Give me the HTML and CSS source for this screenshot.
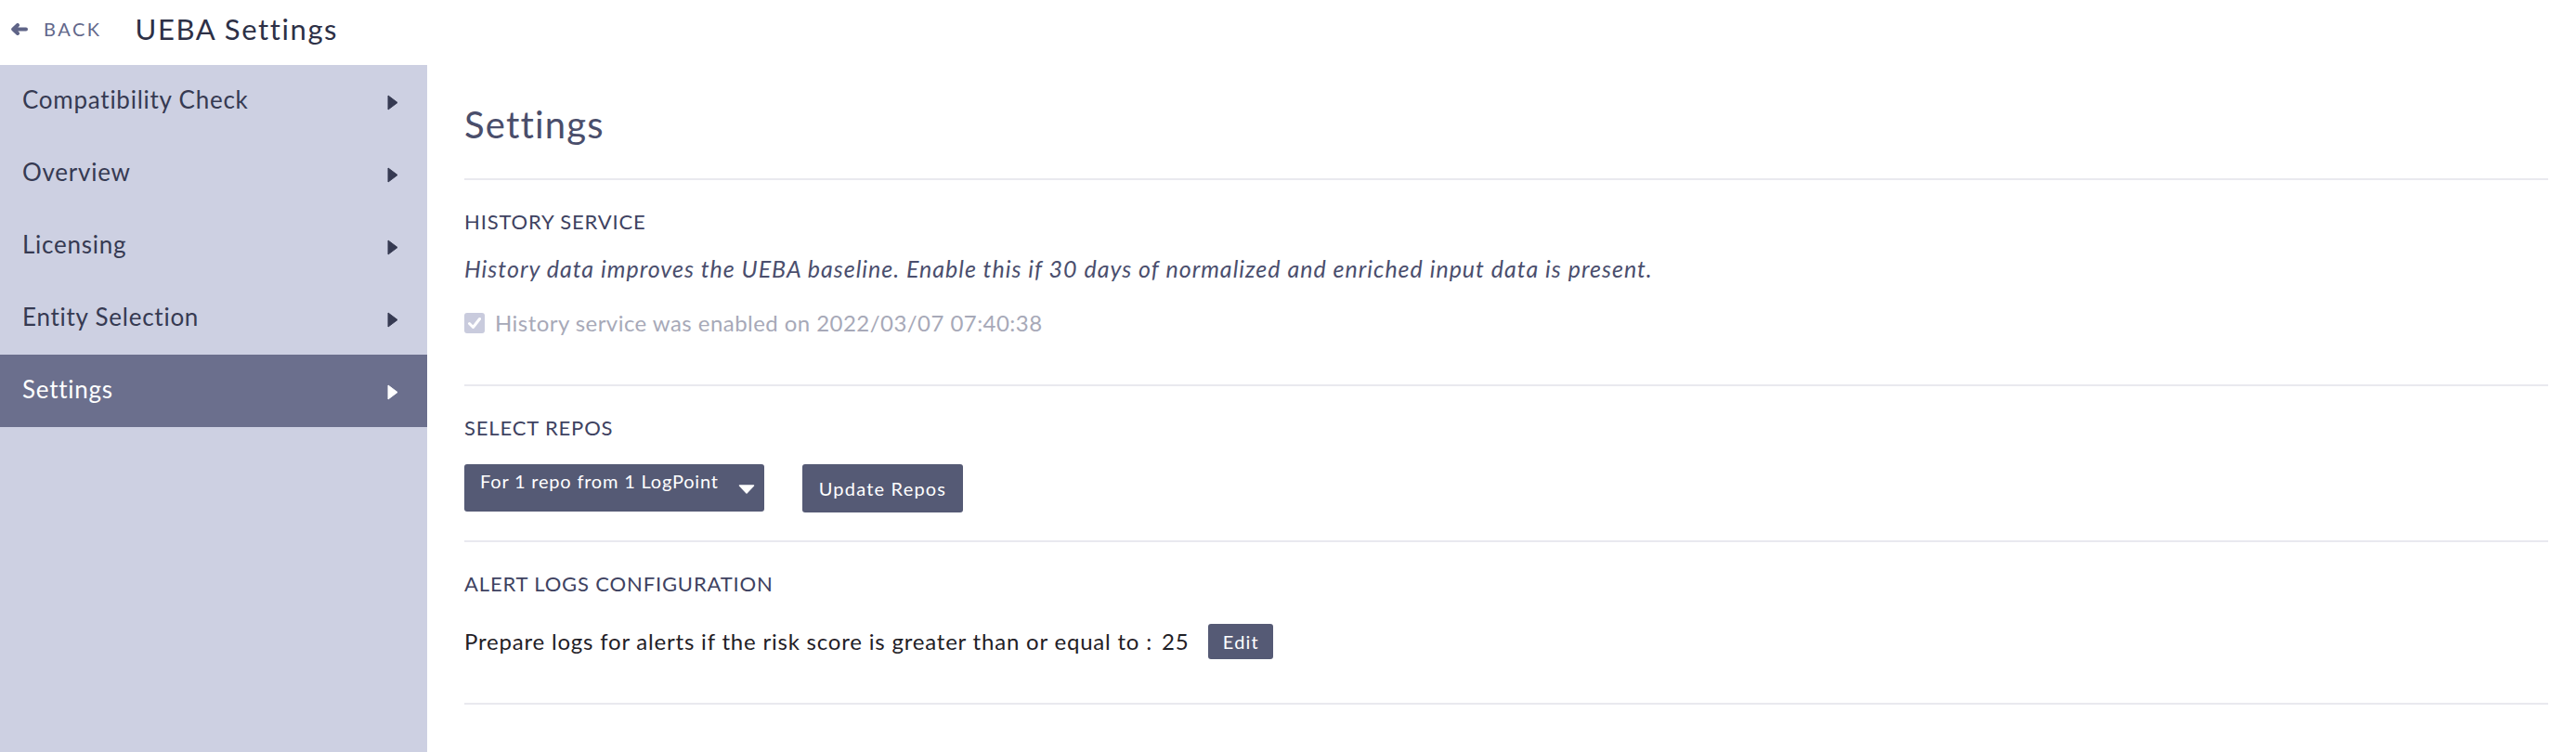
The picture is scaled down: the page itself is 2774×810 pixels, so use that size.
FILE: index.html
```html
<!DOCTYPE html>
<html lang="en">
<head>
<meta charset="utf-8">
<title>UEBA Settings</title>
<link rel="stylesheet" href="styles.css">
</head>
<body>
<header class="topbar">
  <a class="back" href="#">
    <svg class="back-icon" viewBox="0 0 18 13"><path d="M7 2 L2.2 6.5 L7 11 M3 6.5 H16" fill="none" stroke="currentColor" stroke-width="4" stroke-linecap="round" stroke-linejoin="round"/></svg>
    <span class="back-label">BACK</span>
  </a>
  <h1 class="app-title">UEBA Settings</h1>
</header>
<div class="layout">
  <nav class="sidebar">
    <div class="nav-item"><span class="nav-label">Compatibility Check</span><svg class="nav-arrow" viewBox="0 0 12 17"><path d="M1 1 L11 8.5 L1 16 Z"/></svg></div>
    <div class="nav-item"><span class="nav-label">Overview</span><svg class="nav-arrow" viewBox="0 0 12 17"><path d="M1 1 L11 8.5 L1 16 Z"/></svg></div>
    <div class="nav-item"><span class="nav-label">Licensing</span><svg class="nav-arrow" viewBox="0 0 12 17"><path d="M1 1 L11 8.5 L1 16 Z"/></svg></div>
    <div class="nav-item"><span class="nav-label">Entity Selection</span><svg class="nav-arrow" viewBox="0 0 12 17"><path d="M1 1 L11 8.5 L1 16 Z"/></svg></div>
    <div class="nav-item active"><span class="nav-label">Settings</span><svg class="nav-arrow" viewBox="0 0 12 17"><path d="M1 1 L11 8.5 L1 16 Z"/></svg></div>
  </nav>
  <main class="content">
    <h2 class="page-title">Settings</h2>

    <section class="section section-history">
      <h3 class="section-label">HISTORY SERVICE</h3>
      <p class="note">History data improves the UEBA baseline. Enable this if 30 days of normalized and enriched input data is present.</p>
      <div class="check-row">
        <svg class="checkbox" viewBox="0 0 22 22"><rect width="22" height="22" rx="3" fill="#c9cbdd"/><path d="M5.5 11.5 L9.5 15.5 L16.5 6.5" fill="none" stroke="#fff" stroke-width="3" stroke-linecap="round" stroke-linejoin="round"/></svg>
        <span class="check-label">History service was enabled on 2022/03/07 07:40:38</span>
      </div>
    </section>

    <section class="section section-repos">
      <h3 class="section-label">SELECT REPOS</h3>
      <div class="controls">
        <div class="dropdown">
          <span class="dropdown-text">For 1 repo from 1 LogPoint</span>
          <svg class="caret" viewBox="0 0 18 10"><path d="M1.5 1 H16.5 L9 9 Z" fill="#fff" stroke="#fff" stroke-width="1.5" stroke-linejoin="round"/></svg>
        </div>
        <button class="btn btn-update">Update Repos</button>
      </div>
    </section>

    <section class="section section-alert">
      <h3 class="section-label">ALERT LOGS CONFIGURATION</h3>
      <div class="alert-row">
        <span class="alert-text">Prepare logs for alerts if the risk score is greater than or equal to :</span>
        <span class="alert-value">25</span>
        <button class="btn btn-edit">Edit</button>
      </div>
    </section>
  </main>
</div>
</body>
</html>
```

FILE: styles.css
```css
* { box-sizing: border-box; }
html, body { margin: 0; padding: 0; }
body {
  width: 2774px;
  height: 810px;
  overflow: hidden;
  background: #ffffff;
  font-family: Lato, "Noto Sans", sans-serif;
  color: #3a3e58;
}

/* top bar */
.topbar {
  height: 70px;
  display: flex;
  align-items: center;
  padding: 0 0 8px 12px;
}
.back {
  display: flex;
  align-items: center;
  color: #5f6487;
  text-decoration: none;
}
.back-icon { width: 18px; height: 13px; margin-right: 17px; }
.back-label { font-size: 20px; line-height: 24px; letter-spacing: 2.5px; color: #62678a; }
.app-title {
  margin: 0 0 0 36px;
  font-size: 31px;
  line-height: 37px;
  font-weight: 400;
  letter-spacing: 1.6px;
  color: #2d3046;
}

/* layout */
.layout { display: flex; height: 740px; }

.sidebar {
  width: 460px;
  flex: none;
  background: #cdd0e2;
}
.nav-item {
  height: 78px;
  display: flex;
  align-items: center;
  justify-content: space-between;
  padding: 0 31px 0 24px;
  color: #363a52;
}
.nav-item.active { background: #6b6f8d; color: #ffffff; }
.nav-label {
  font-size: 26px;
  line-height: 26px;
  padding-bottom: 4px;
  letter-spacing: 0.75px;
}
.nav-arrow {
  width: 12px;
  height: 17px;
  margin-top: 3px;
  fill: currentColor;
  stroke: currentColor;
  stroke-width: 1;
  stroke-linejoin: round;
}

/* content */
.content {
  flex: 1;
  padding: 40px 30px 0 40px;
}
.page-title {
  margin: 0 0 34px;
  font-size: 40px;
  line-height: 48px;
  font-weight: 400;
  letter-spacing: 1.2px;
  color: #4a4e6b;
}
.section {
  border-top: 2px solid #e9e9ef;
  padding-top: 32px;
}
.section-history { padding-bottom: 51px; }
.section-repos { padding-bottom: 30px; }
.section-alert { padding-bottom: 47px; border-bottom: 2px solid #e9e9ef; }

.section-label {
  margin: 0;
  font-size: 22px;
  line-height: 26px;
  font-weight: 400;
  letter-spacing: 0.85px;
  color: #3e4261;
}
.note {
  margin: 22px 0 0;
  font-size: 25px;
  line-height: 30px;
  font-style: italic;
  letter-spacing: 1px;
  color: #4a4e6d;
}
.check-row {
  margin-top: 29px;
  display: flex;
  align-items: center;
  height: 30px;
}
.checkbox { width: 22px; height: 22px; flex: none; }
.check-label {
  margin-left: 11px;
  font-size: 24px;
  line-height: 30px;
  letter-spacing: 0.45px;
  color: #a7a9b8;
}

.controls {
  margin-top: 26px;
  display: flex;
  align-items: flex-start;
}
.dropdown {
  width: 323px;
  height: 51px;
  display: flex;
  justify-content: space-between;
  padding: 6px 10px 0 17px;
  background: #555a75;
  border-radius: 3px;
  color: #ffffff;
}
.dropdown-text { font-size: 20px; line-height: 24px; letter-spacing: 0.8px; }
.caret { width: 18px; height: 10px; align-self: center; margin-top: -3px; }

.btn {
  border: 0;
  border-radius: 3px;
  background: #555a75;
  color: #ffffff;
  font-family: inherit;
  font-size: 20px;
  line-height: 24px;
  letter-spacing: 1.2px;
  display: flex;
  align-items: center;
  justify-content: center;
}
.btn-update { margin-left: 41px; width: 173px; height: 52px; padding: 0; }

.alert-row {
  margin-top: 30px;
  display: flex;
  align-items: center;
  height: 38px;
}
.alert-text, .alert-value {
  font-size: 24px;
  line-height: 30px;
  letter-spacing: 0.8px;
  color: #1f2026;
}
.alert-value { margin-left: 10px; }
.btn-edit { margin-left: 21px; width: 70px; height: 38px; padding: 0; }
```
